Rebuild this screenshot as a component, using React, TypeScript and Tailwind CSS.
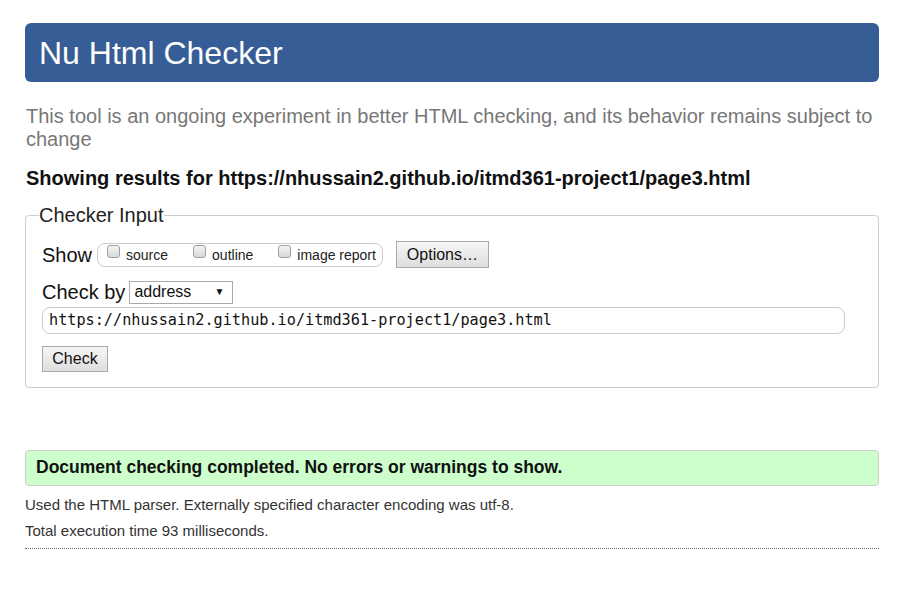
import React from 'react'

const sans = "font-['Liberation_Sans',Arial,sans-serif]"

function Box({ label }: { label: string }) {
  return (
    <span className="flex items-start">
      <span className="mt-[1px] w-[13px] h-[13px] rounded-[3px] border border-[#a0a0a0] bg-gradient-to-b from-[#f4f4f4] to-[#d8d8d8]" />
      <span className="ml-[6px] mt-[3px] text-[14px] leading-[16px] text-[#222]">{label}</span>
    </span>
  )
}

export default function App() {
  const url = 'https://nhussain2.github.io/itmd361-project1/page3.html'

  return (
    <div className={`${sans} bg-white w-[900px] h-[604px] pt-[23px] px-[25px] text-[#111]`}>
      {/* Title bar */}
      <div className="w-[854px] h-[59px] rounded-[6px] bg-[#365d95] flex items-center pl-[14px]">
        <h1 className="text-[32px] text-white leading-none">Nu Html Checker</h1>
      </div>

      {/* Intro */}
      <p className="mt-[23px] pl-[1px] text-[20px] leading-[23px] text-[#777]">
        This tool is an ongoing experiment in better HTML checking, and its behavior remains subject to change
      </p>

      <h2 className="mt-[16px] pl-[1px] text-[20px] leading-[23px] font-bold text-[#111]">
        Showing results for {url}
      </h2>

      {/* Checker input */}
      <fieldset className="mt-[14px] w-[854px] border border-[#ccc] rounded-[4px] px-[16px] pb-[15px]">
        <legend className="ml-[-3px] px-0 text-[20px] leading-[23px] text-[#222]">Checker Input</legend>

        <div className="mt-[14px] flex items-center h-[27px]">
          <span className="text-[20px] leading-none text-[#111]">Show</span>
          <div className="ml-[5px] h-[24px] flex items-start gap-[25px] border border-[#ccc] rounded-[8px] pl-[9px] pr-[6px]">
            <Box label="source" />
            <Box label="outline" />
            <Box label="image report" />
          </div>
          <button className="ml-[13px] h-[27px] w-[93px] border border-[#a8a8a8] bg-gradient-to-b from-[#f6f6f6] to-[#dedede] text-[16px] text-[#111]">
            Options…
          </button>
        </div>

        <div className="mt-[12px] flex items-center h-[24px]">
          <span className="text-[20px] leading-none text-[#111]">Check by</span>
          <div className="ml-[4px] w-[104px] h-[23px] border border-[#a9a9a9] bg-white flex items-center justify-between pl-[4px] pr-[8px]">
            <span className="text-[16px] leading-none text-[#111]">address</span>
            <span className="text-[10px] leading-none text-[#111]">▼</span>
          </div>
        </div>

        <div className="mt-[3px] w-[803px] h-[27px] border border-[#ccc] rounded-[8px] flex items-center pl-[6px]">
          <span className="font-['DejaVu_Sans_Mono',monospace] text-[15.2px] leading-none text-[#111]">{url}</span>
        </div>

        <button className="mt-[12px] block h-[26px] w-[66px] border border-[#a8a8a8] bg-gradient-to-b from-[#f6f6f6] to-[#dedede] text-[16px] text-[#111]">
          Check
        </button>
      </fieldset>

      {/* Result */}
      <div className="mt-[62px] w-[854px] h-[36px] bg-[#ccffcc] border border-[#ccc] rounded-[4px] flex items-center pl-[10px]">
        <p className="text-[17.5px] font-bold leading-none text-[#111]">
          Document checking completed. No errors or warnings to show.
        </p>
      </div>

      <p className="mt-[9px] text-[15px] leading-[20px] text-[#333]">
        Used the HTML parser. Externally specified character encoding was utf-8.
      </p>
      <p className="mt-[6px] text-[15px] leading-[20px] text-[#333]">Total execution time 93 milliseconds.</p>

      <hr className="mt-[7px] w-[854px] border-0 border-t border-dotted border-[#666]" />
    </div>
  )
}
